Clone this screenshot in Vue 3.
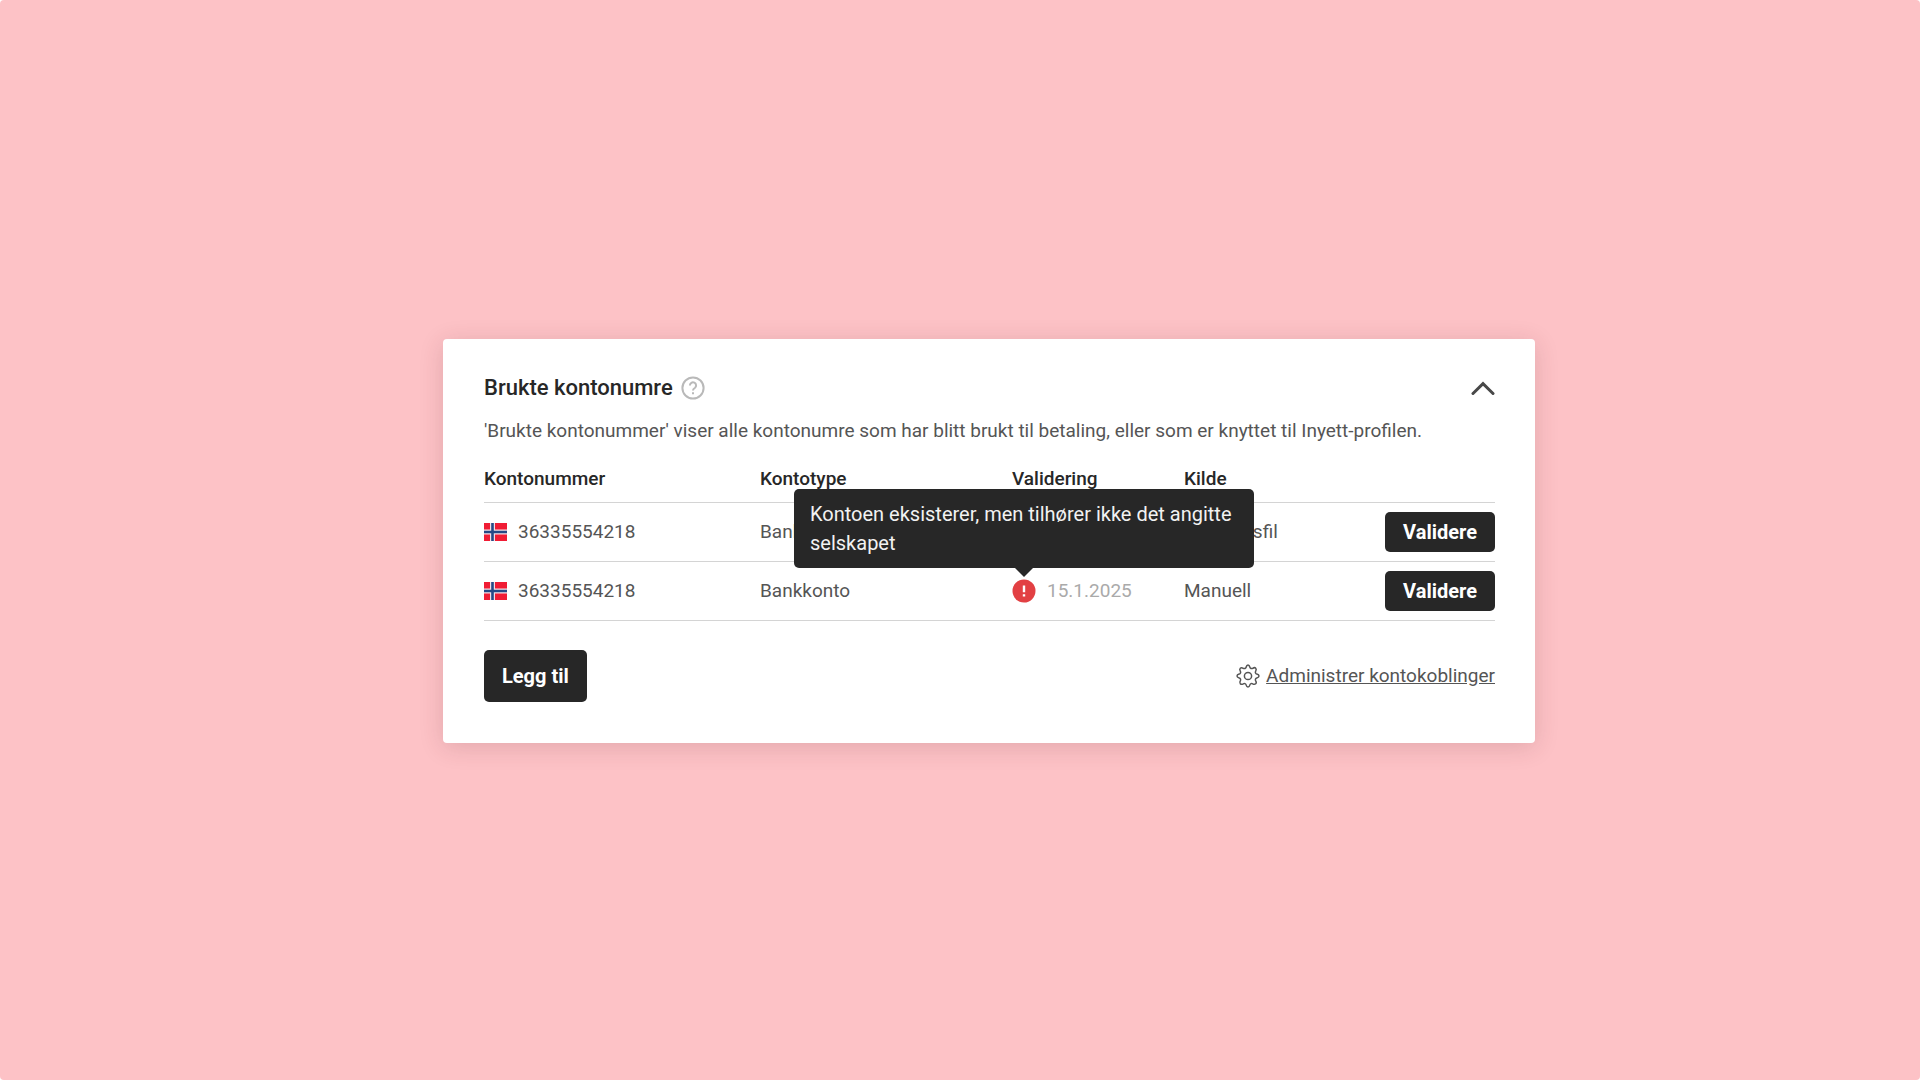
<script setup>
import { ref } from 'vue'

const open = ref(true)
const accounts = [
  { id: 1, number: '36335554218', type: 'Bankkonto', date: '15.1.2025', source: 'Betalingsfil', warning: '' },
  {
    id: 2,
    number: '36335554218',
    type: 'Bankkonto',
    date: '15.1.2025',
    source: 'Manuell',
    warning: 'Kontoen eksisterer, men tilhører ikke det angitte selskapet',
  },
]
</script>

<template>
  <main class="page">
    <section class="card">
      <header class="card-head">
        <h1>Brukte kontonumre</h1>
        <button class="icon-button" type="button" aria-label="Hjelp">
          <svg width="24" height="24" viewBox="0 0 24 24" fill="none" stroke="#b9b9b9" stroke-width="2">
            <circle cx="12" cy="12" r="10.6" />
            <path d="M8.9 9.5a3.1 3.1 0 1 1 4.9 2.5c-1.2.8-1.8 1.3-1.8 2.5" />
            <path d="M12 16.3v2" />
          </svg>
        </button>
        <button class="icon-button toggle" type="button" aria-label="Vis eller skjul" :aria-expanded="open" @click="open = !open">
          <svg width="24" height="24" viewBox="0 0 24 24" fill="none" stroke="#484848" stroke-width="3" stroke-linecap="round" stroke-linejoin="miter">
            <path d="M2 17.5 12 7.7l10 9.8" />
          </svg>
        </button>
      </header>

      <template v-if="open">
        <p class="intro">'Brukte kontonummer' viser alle kontonumre som har blitt brukt til betaling, eller som er knyttet til Inyett-profilen.</p>

        <table>
          <thead>
            <tr>
              <th class="col-number">Kontonummer</th>
              <th class="col-type">Kontotype</th>
              <th class="col-check">Validering</th>
              <th>Kilde</th>
              <th></th>
            </tr>
          </thead>
          <tbody>
            <tr v-for="account in accounts" :key="account.id">
              <td>
                <div class="inline number">
                  <svg width="23" height="18" viewBox="0 0 23 18">
                    <path fill="#f01c34" d="M0 0h23v18H0z" />
                    <path fill="#f3dfe6" d="M6 0h5v18H6zM0 6.5h23v5H0z" />
                    <path fill="#254a86" d="M7.2 0h2.6v18H7.2zM0 7.7h23v2.6H0z" />
                  </svg>
                  {{ account.number }}
                </div>
              </td>
              <td>{{ account.type }}</td>
              <td>
                <div class="inline date">
                  <span class="status">
                    <svg width="24" height="24" viewBox="0 0 24 24">
                      <circle cx="12" cy="12" r="11.5" fill="#e24043" />
                      <path fill="none" stroke="#fff" stroke-width="2.4" d="M12 6.5v6.8M12 15.2v2.3" />
                    </svg>
                    <span v-if="account.warning" class="tooltip" role="tooltip">{{ account.warning }}</span>
                  </span>
                  {{ account.date }}
                </div>
              </td>
              <td>{{ account.source }}</td>
              <td class="action"><button class="solid small" type="button">Validere</button></td>
            </tr>
          </tbody>
        </table>

        <footer class="card-foot">
          <button class="solid" type="button">Legg til</button>
          <a class="manage" href="#">
            <svg width="24" height="24" viewBox="0 0 24 24" fill="none" stroke="#555" stroke-width="1.5" stroke-linejoin="round">
              <path d="M10.1 3.2C10.5 1.6 11 1 12 1s1.500.6 1.900 2.200c.3 1.200 1.700 1.800 2.800 1.100 1.400-.9 2.300-.9 3 -.1s.8 1.700-.1 3.100c-.6 1.100 0 2.400 1.200 2.800 1.600.4 2.200.9 2.200 1.900s-.6 1.500-2.200 1.900c-1.200.3-1.800 1.700-1.200 2.800.9 1.400.9 2.300.1 3s-1.600.9-3 .1c-1.100-.7-2.500-.1-2.800 1.100C13.500 22.400 13 23 12 23s-1.500-.6-1.900-2.100c-.3-1.200-1.700-1.800-2.800-1.100-1.400.8-2.300.7-3-.1s-.8-1.600.1-3c.6-1.100 0-2.500-1.200-2.800C1.600 13.500 1 13 1 12s.6-1.500 2.200-1.900c1.200-.4 1.800-1.700 1.200-2.800-.9-1.400-.9-2.300-.1-3.100s1.600-.8 3 .1c1.100.7 2.500.1 2.800-1.100z" />
              <circle cx="12" cy="12" r="3.6" />
            </svg>
            <span>Administrer kontokoblinger</span>
          </a>
        </footer>
      </template>
    </section>
  </main>
</template>

<style>
body {
  margin: 0;
  background: #fff;
}
</style>

<style scoped>
.page {
  display: flex;
  align-items: center;
  justify-content: center;
  box-sizing: border-box;
  min-height: 100vh;
  padding: 26px 24px 24px 82px;
  border-radius: 4px;
  background: #fdc2c6;
  color: #555;
  font-family: Roboto, "Liberation Sans", sans-serif;
  font-size: 19px;
  line-height: 24px;
}

.card {
  box-sizing: border-box;
  width: 100%;
  max-width: 1092px;
  padding: 36px 40px 41px 41px;
  border-radius: 4px;
  background: #fff;
  box-shadow: 0 4px 24px rgba(80, 30, 40, 0.16);
}

.card-head {
  display: flex;
  align-items: center;
  gap: 8px;
}

h1 {
  margin: 0;
  color: #272727;
  font-size: 22px;
  font-weight: 500;
  line-height: 26px;
}

button {
  border: 0;
  font: inherit;
  cursor: pointer;
}

.icon-button {
  display: flex;
  padding: 0;
  background: none;
}

.toggle {
  margin-left: auto;
}

.intro {
  margin: 18px 0 0;
}

table {
  width: 100%;
  margin-top: 12px;
  border-collapse: collapse;
  table-layout: fixed;
}

th,
td {
  padding: 0;
  border-bottom: 1px solid #d4d4d4;
  text-align: left;
}

th {
  height: 47px;
  color: #272727;
  font-weight: 500;
  vertical-align: middle;
}

td {
  height: 58px;
}

.col-number {
  width: 276px;
}

.col-type {
  width: 252px;
}

.col-check {
  width: 172px;
}

.inline {
  display: flex;
  align-items: center;
  gap: 11px;
}

.date {
  color: #aaa;
}

.status {
  position: relative;
  display: flex;
}

.tooltip {
  position: absolute;
  bottom: 35px;
  left: 50%;
  box-sizing: border-box;
  width: 460px;
  padding: 11px 16px 10px;
  border-radius: 5px;
  background: #272727;
  color: #f2f2f2;
  font-size: 20px;
  line-height: 29px;
  transform: translateX(-50%);
}

.tooltip::after {
  position: absolute;
  top: 100%;
  left: 50%;
  border: 9px solid transparent;
  border-top-color: #272727;
  border-bottom: 0;
  content: "";
  transform: translateX(-50%);
}

.action {
  text-align: right;
}

.solid {
  padding: 14px 18px;
  border-radius: 5px;
  background: #272727;
  color: #fff;
  font-size: 20px;
  font-weight: 700;
}

.small {
  padding: 8px 18px;
}

.card-foot {
  display: flex;
  align-items: center;
  justify-content: space-between;
  margin-top: 29px;
}

.manage {
  display: flex;
  align-items: center;
  gap: 6px;
  color: #555;
  text-decoration: none;
}

.manage span {
  text-decoration: underline;
}
</style>
